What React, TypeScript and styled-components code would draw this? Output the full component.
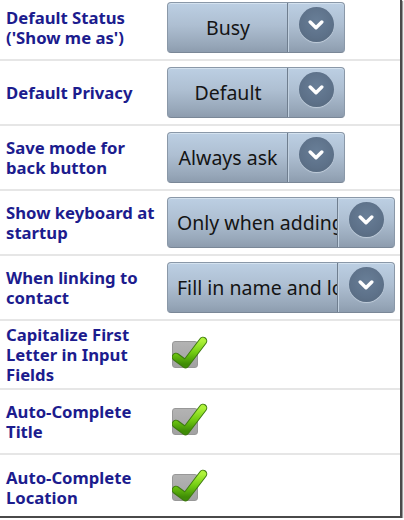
import React from "react";
import styled, { createGlobalStyle } from "styled-components";

const Global = createGlobalStyle`
  html, body { margin: 0; padding: 0; background: #ffffff; }
  body { font-family: "Noto Sans", "Open Sans", sans-serif; }
`;

const Frame = styled.div`
  width: 400px;
  height: 516px;
  overflow: hidden;
  background: #ffffff;
  border-right: 2px solid #4a4a4a;
  border-bottom: 2px solid #4a4a4a;
  box-shadow: 1px 1px 1px #9a9a9a;
`;

const List = styled.div`
  margin-top: -4px;
  display: flex;
  flex-direction: column;
`;

const Row = styled.div`
  display: flex;
  align-items: center;
  min-height: 65px;
  padding: 3.5px 0;
  box-sizing: border-box;
  border-bottom: 2px solid #e6e6e6;
  &:last-child { border-bottom: none; }
`;

const Label = styled.div<{ $shift?: number }>`
  width: 167px;
  flex: none;
  padding-left: 6px;
  box-sizing: border-box;
  font-family: "Noto Sans", "Open Sans", sans-serif;
  font-weight: 700;
  font-size: 16.7px;
  line-height: 20px;
  color: #1c1c8e;
`;

const SpinnerBox = styled.div<{ $wide?: boolean }>`
  display: flex;
  align-items: stretch;
  width: ${(p) => (p.$wide ? 228 : 178)}px;
  height: 51px;
  box-sizing: border-box;
  border-radius: 4px;
  border: 1px solid #8a98a8;
  border-bottom-color: #7a8797;
  background: linear-gradient(#bccfe3 0%, #aebfd2 45%, #97a7b9 85%, #8d9cae 100%);
  box-shadow: inset 0 1px 0 #d4e2ef;
`;

const SpinnerText = styled.div`
  flex: 1;
  min-width: 0;
  overflow: hidden;
  white-space: nowrap;
  text-align: center;
  padding: 0 8px 0 9px;
  font-family: "Noto Sans", "Open Sans", sans-serif;
  font-size: 19.5px;
  line-height: 49px;
  color: #141414;
`;

const SpinnerArrow = styled.div`
  width: 57px;
  flex: none;
  display: flex;
  justify-content: center;
  align-items: flex-start;
  padding-top: 4px;
  box-sizing: border-box;
  border-left: 1px solid #6f7e8f;
  box-shadow: inset 1px 0 0 #c2d1e0;
`;

const Circle = styled.div`
  width: 35px;
  height: 35px;
  border-radius: 50%;
  background: radial-gradient(circle at 50% 40%, #687e97 0%, #5d7189 60%, #546679 100%);
  box-shadow: 0 1px 1px rgba(220, 230, 240, 0.6);
  display: flex;
  align-items: center;
  justify-content: center;
`;

const CheckWrap = styled.div`
  margin-left: 5px;
  width: 36px;
  height: 37px;
  position: relative;
`;

const CheckBoxSquare = styled.div`
  position: absolute;
  left: 0;
  top: 5px;
  width: 26px;
  height: 27px;
  box-sizing: border-box;
  border-radius: 3px;
  border: 1px solid #989898;
  background: linear-gradient(#b3b3b3, #a2a2a2);
`;

const CheckMark = styled.svg`
  position: absolute;
  left: 0;
  top: 0;
`;

function Chevron() {
  return (
    <svg width="16" height="12" viewBox="0 0 16 12">
      <path d="M2.2 3 L8 8.8 L13.8 3" fill="none" stroke="#ffffff" strokeWidth="3.4" strokeLinecap="round" strokeLinejoin="round" />
    </svg>
  );
}

function Spinner({ value, wide }: { value: string; wide?: boolean }) {
  return (
    <SpinnerBox $wide={wide}>
      <SpinnerText>{value}</SpinnerText>
      <SpinnerArrow>
        <Circle>
          <Chevron />
        </Circle>
      </SpinnerArrow>
    </SpinnerBox>
  );
}

function Check({ id }: { id: string }) {
  return (
    <CheckWrap>
      <CheckBoxSquare />
      <CheckMark width="36" height="37" viewBox="0 0 36 37">
        <defs>
          <linearGradient id={id} x1="0" y1="0" x2="0" y2="1">
            <stop offset="0" stopColor="#aef23a" />
            <stop offset="0.5" stopColor="#72cc12" />
            <stop offset="1" stopColor="#3f8c06" />
          </linearGradient>
        </defs>
        <polyline
          points="4,21 13.5,28 31,5"
          fill="none"
          stroke="#3e7a10"
          strokeWidth="8.5"
          strokeLinejoin="round"
          strokeLinecap="round"
        />
        <polyline
          points="4,21 13.5,28 31,5"
          fill="none"
          stroke={`url(#${id})`}
          strokeWidth="6.5"
          strokeLinejoin="round"
          strokeLinecap="round"
        />
      </CheckMark>
    </CheckWrap>
  );
}

const spinners: { label: string[]; value: string; wide?: boolean }[] = [
  { label: ["Default Status", "('Show me as')"], value: "Busy" },
  { label: ["Default Privacy"], value: "Default" },
  { label: ["Save mode for", "back button"], value: "Always ask" },
  { label: ["Show keyboard at", "startup"], value: "Only when adding event", wide: true },
  { label: ["When linking to", "contact"], value: "Fill in name and location", wide: true },
];

const checks: string[][] = [
  ["Capitalize First", "Letter in Input", "Fields"],
  ["Auto-Complete", "Title"],
  ["Auto-Complete", "Location"],
];

export default function App() {
  return (
    <>
      <Global />
      <Frame>
        <List>
          {spinners.map((s, i) => (
            <Row key={"s" + i}>
              <Label>
                {s.label.map((l, j) => (
                  <div key={j}>{l}</div>
                ))}
              </Label>
              <Spinner value={s.value} wide={s.wide} />
            </Row>
          ))}
          {checks.map((c, i) => (
            <Row key={"c" + i}>
              <Label>
                {c.map((l, j) => (
                  <div key={j}>{l}</div>
                ))}
              </Label>
              <Check id={"cg" + i} />
            </Row>
          ))}
        </List>
      </Frame>
    </>
  );
}
